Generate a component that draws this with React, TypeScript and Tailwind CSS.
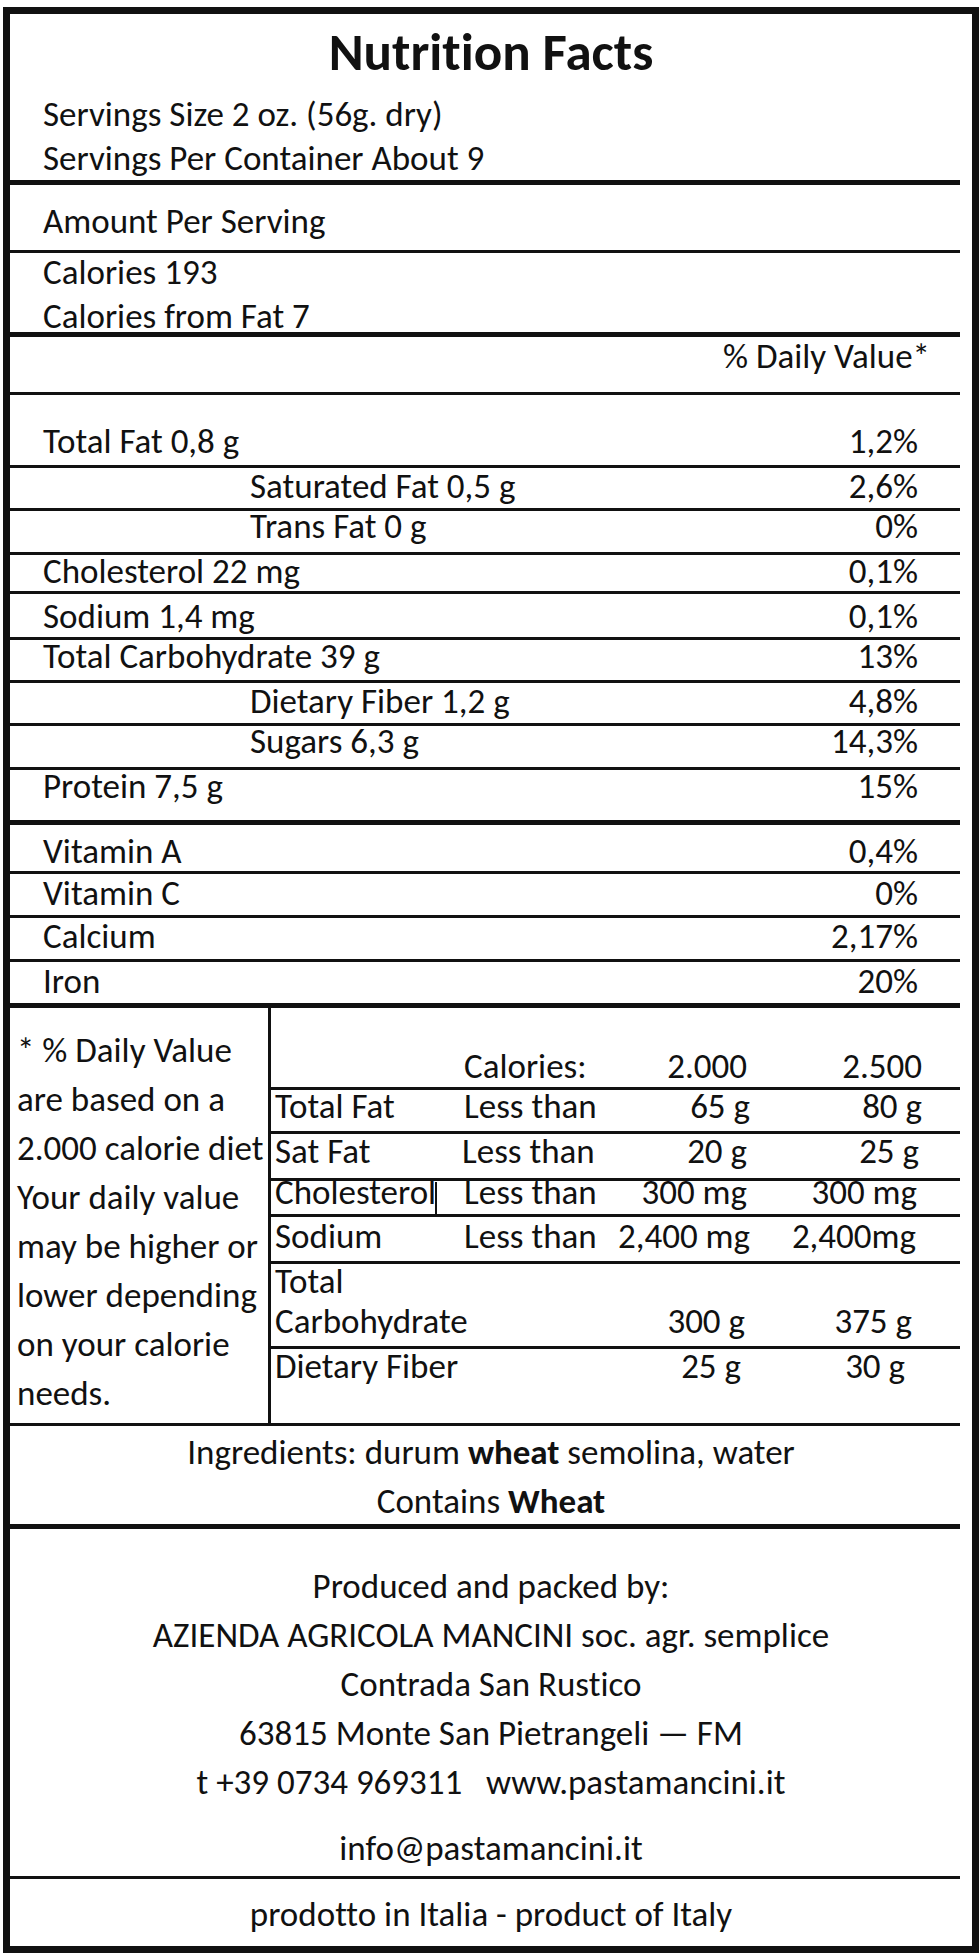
type Nutrient = {
  label: string;
  value: string;
  indent?: boolean;
  cls: string;
};

// row boxes include their bottom rule, heights taken from the label
const nutrients: Nutrient[] = [
  { label: 'Total Fat 0,8 g', value: '1,2%', cls: 'h-[73px] pt-[31px] border-b-[3px]' },
  { label: 'Saturated Fat 0,5 g', value: '2,6%', indent: true, cls: 'h-[43px] pt-[3px] border-b-[3px]' },
  { label: 'Trans Fat 0 g', value: '0%', indent: true, cls: 'h-[44px] pt-0 border-b-[3px]' },
  { label: 'Cholesterol 22 mg', value: '0,1%', cls: 'h-[39px] pt-[1px] border-b-[3px]' },
  { label: 'Sodium 1,4 mg', value: '0,1%', cls: 'h-[46px] pt-[7px] border-b-[3px]' },
  { label: 'Total Carbohydrate 39 g', value: '13%', cls: 'h-[43px] pt-[1px] border-b-[3px]' },
  { label: 'Dietary Fiber 1,2 g', value: '4,8%', indent: true, cls: 'h-[43px] pt-[3px] border-b-[3px]' },
  { label: 'Sugars 6,3 g', value: '14,3%', indent: true, cls: 'h-[44px] pt-0 border-b-[3px]' },
  { label: 'Protein 7,5 g', value: '15%', cls: 'h-[55px] pt-[1px] border-b-[5px]' },
  { label: 'Vitamin A', value: '0,4%', cls: 'h-[49px] pt-[11px] border-b-[3px]' },
  { label: 'Vitamin C', value: '0%', cls: 'h-[44px] pt-[4px] border-b-[3px]' },
  { label: 'Calcium', value: '2,17%', cls: 'h-[44px] pt-[3px] border-b-[3px]' },
  { label: 'Iron', value: '20%', cls: 'h-[46px] pt-[4px] border-b-[5px]' },
];

type DailyRow = {
  label: string;
  a: string;
  b: string;
  rowCls: string;
  aCls: string;
  bCls: string;
};

const dailyRows: DailyRow[] = [
  { label: 'Total Fat', a: '65 g', b: '80 g', rowCls: 'h-[44px] pt-[1px] leading-[30px]', aCls: 'pr-0', bCls: 'pr-0' },
  { label: 'Sat Fat', a: '20 g', b: '25 g', rowCls: 'h-[47px] pt-[2px] leading-[30px]', aCls: 'pr-[3px]', bCls: 'pr-[3px]' },
  { label: 'Cholesterol', a: '300 mg', b: '300 mg', rowCls: 'h-[36px] pt-[1px] leading-[20px]', aCls: 'pr-[3px]', bCls: 'pr-[5px]' },
  { label: 'Sodium', a: '2,400 mg', b: '2,400mg', rowCls: 'h-[47px] pt-[4px] leading-[30px]', aCls: 'pr-0', bCls: 'pr-[6px]' },
];

function NutrientRow({ n }: { n: Nutrient }) {
  return (
    <div className={`flex justify-between pl-[33px] leading-[30px] whitespace-nowrap ${n.cls}`}>
      <span className={n.indent ? 'pl-[207px]' : ''}>{n.label}</span>
      <span className="pr-[42px]">{n.value}</span>
    </div>
  );
}

function DailyValueTable() {
  return (
    <div className="flex h-[418px] border-b-[3px]">
      <div className="w-[261px] shrink-0 border-r-[3px] pt-[18px] pl-[7px] leading-[49px] whitespace-nowrap">
        <p>* % Daily Value</p>
        <p>are based on a</p>
        <p>2.000 calorie diet</p>
        <p>Your daily value</p>
        <p>may be higher or</p>
        <p>lower depending</p>
        <p>on your calorie</p>
        <p>needs.</p>
      </div>
      <div className="flex flex-1 flex-col whitespace-nowrap">
        <div className="grid h-[82px] grid-cols-[191px_138px_150px_172px] border-b-[3px] pt-[43px] leading-[30px]">
          <span />
          <span className="pl-[2px]">Calories:</span>
          <span className="pr-[3px] text-right">2.000</span>
          <span className="text-right">2.500</span>
        </div>
        {dailyRows.map((r, i) => (
          <div key={r.label} className={`grid grid-cols-[191px_138px_150px_172px] border-b-[3px] ${r.rowCls}`}>
            <span className={i === 2 ? 'h-full w-[166px] border-r-2 pl-[4px]' : 'pl-[4px]'}>{r.label}</span>
            <span className={i === 1 ? 'pl-0' : 'pl-[2px]'}>Less than</span>
            <span className={`text-right ${r.aCls}`}>{r.a}</span>
            <span className={`text-right ${r.bCls}`}>{r.b}</span>
          </div>
        ))}
        <div className="grid h-[85px] grid-cols-[191px_138px_150px_172px] border-b-[3px]">
          <span className="pl-[4px]">
            <span className="block leading-[34px]">Total</span>
            <span className="block leading-[46px]">Carbohydrate</span>
          </span>
          <span />
          <span className="pt-[42px] pr-[5px] text-right leading-[30px]">300 g</span>
          <span className="pt-[42px] pr-[10px] text-right leading-[30px]">375 g</span>
        </div>
        <div className="grid flex-1 grid-cols-[191px_138px_150px_172px] pt-[2px] leading-[30px]">
          <span className="pl-[4px]">Dietary Fiber</span>
          <span />
          <span className="pr-[9px] text-right">25 g</span>
          <span className="pr-[17px] text-right">30 g</span>
        </div>
      </div>
    </div>
  );
}

export default function App() {
  return (
    <div className="min-h-screen bg-white pt-[7px] pl-[3px] font-['Carlito','Liberation_Sans',sans-serif] text-[35px] text-[#111] [font-variant-ligatures:none]">
      <div className="h-[1946px] w-[976px] border-[7px] border-[#111] pr-[12px]">
        <section className="h-[171px] border-b-[5px]">
          <h1 className="pt-[12px] pl-[12px] text-center text-[53px] leading-[53px] font-bold">Nutrition Facts</h1>
          <div className="mt-[13px] pl-[33px] leading-[44px]">
            <p>Servings Size 2 oz. (56g. dry)</p>
            <p>Servings Per Container About 9</p>
          </div>
        </section>

        <section className="h-[68px] border-b-[3px] pt-[14px] pl-[33px] leading-[44px]">
          <p>Amount Per Serving</p>
        </section>

        <section className="h-[84px] border-b-[5px] pl-[33px] leading-[38px]">
          <p>Calories 193</p>
          <p className="mt-[6px]">Calories from Fat 7</p>
        </section>

        <section className="h-[58px] border-b-[3px] pr-[30px] text-right leading-[38px]">
          <p>% Daily Value*</p>
        </section>

        {nutrients.map((n) => (
          <NutrientRow key={n.label} n={n} />
        ))}

        <DailyValueTable />

        <section className="h-[103px] border-b-[5px] pt-[2px] pl-[12px] text-center leading-[49px]">
          <p>
            Ingredients: durum <b>wheat</b> semolina, water
          </p>
          <p>
            Contains <b>Wheat</b>
          </p>
        </section>

        <section className="h-[350px] border-b-[3px] pt-[33px] pl-[12px] text-center leading-[49px]">
          <p>Produced and packed by:</p>
          <p>AZIENDA AGRICOLA MANCINI soc. agr. semplice</p>
          <p>Contrada San Rustico</p>
          <p>63815 Monte San Pietrangeli — FM</p>
          <p className="whitespace-pre">t +39 0734 969311   www.pastamancini.it</p>
          <p className="mt-[17px]">info@pastamancini.it</p>
        </section>

        <footer className="h-[66px] pt-[11px] pl-[12px] text-center leading-[49px]">
          prodotto in Italia - product of Italy
        </footer>
      </div>
    </div>
  );
}
